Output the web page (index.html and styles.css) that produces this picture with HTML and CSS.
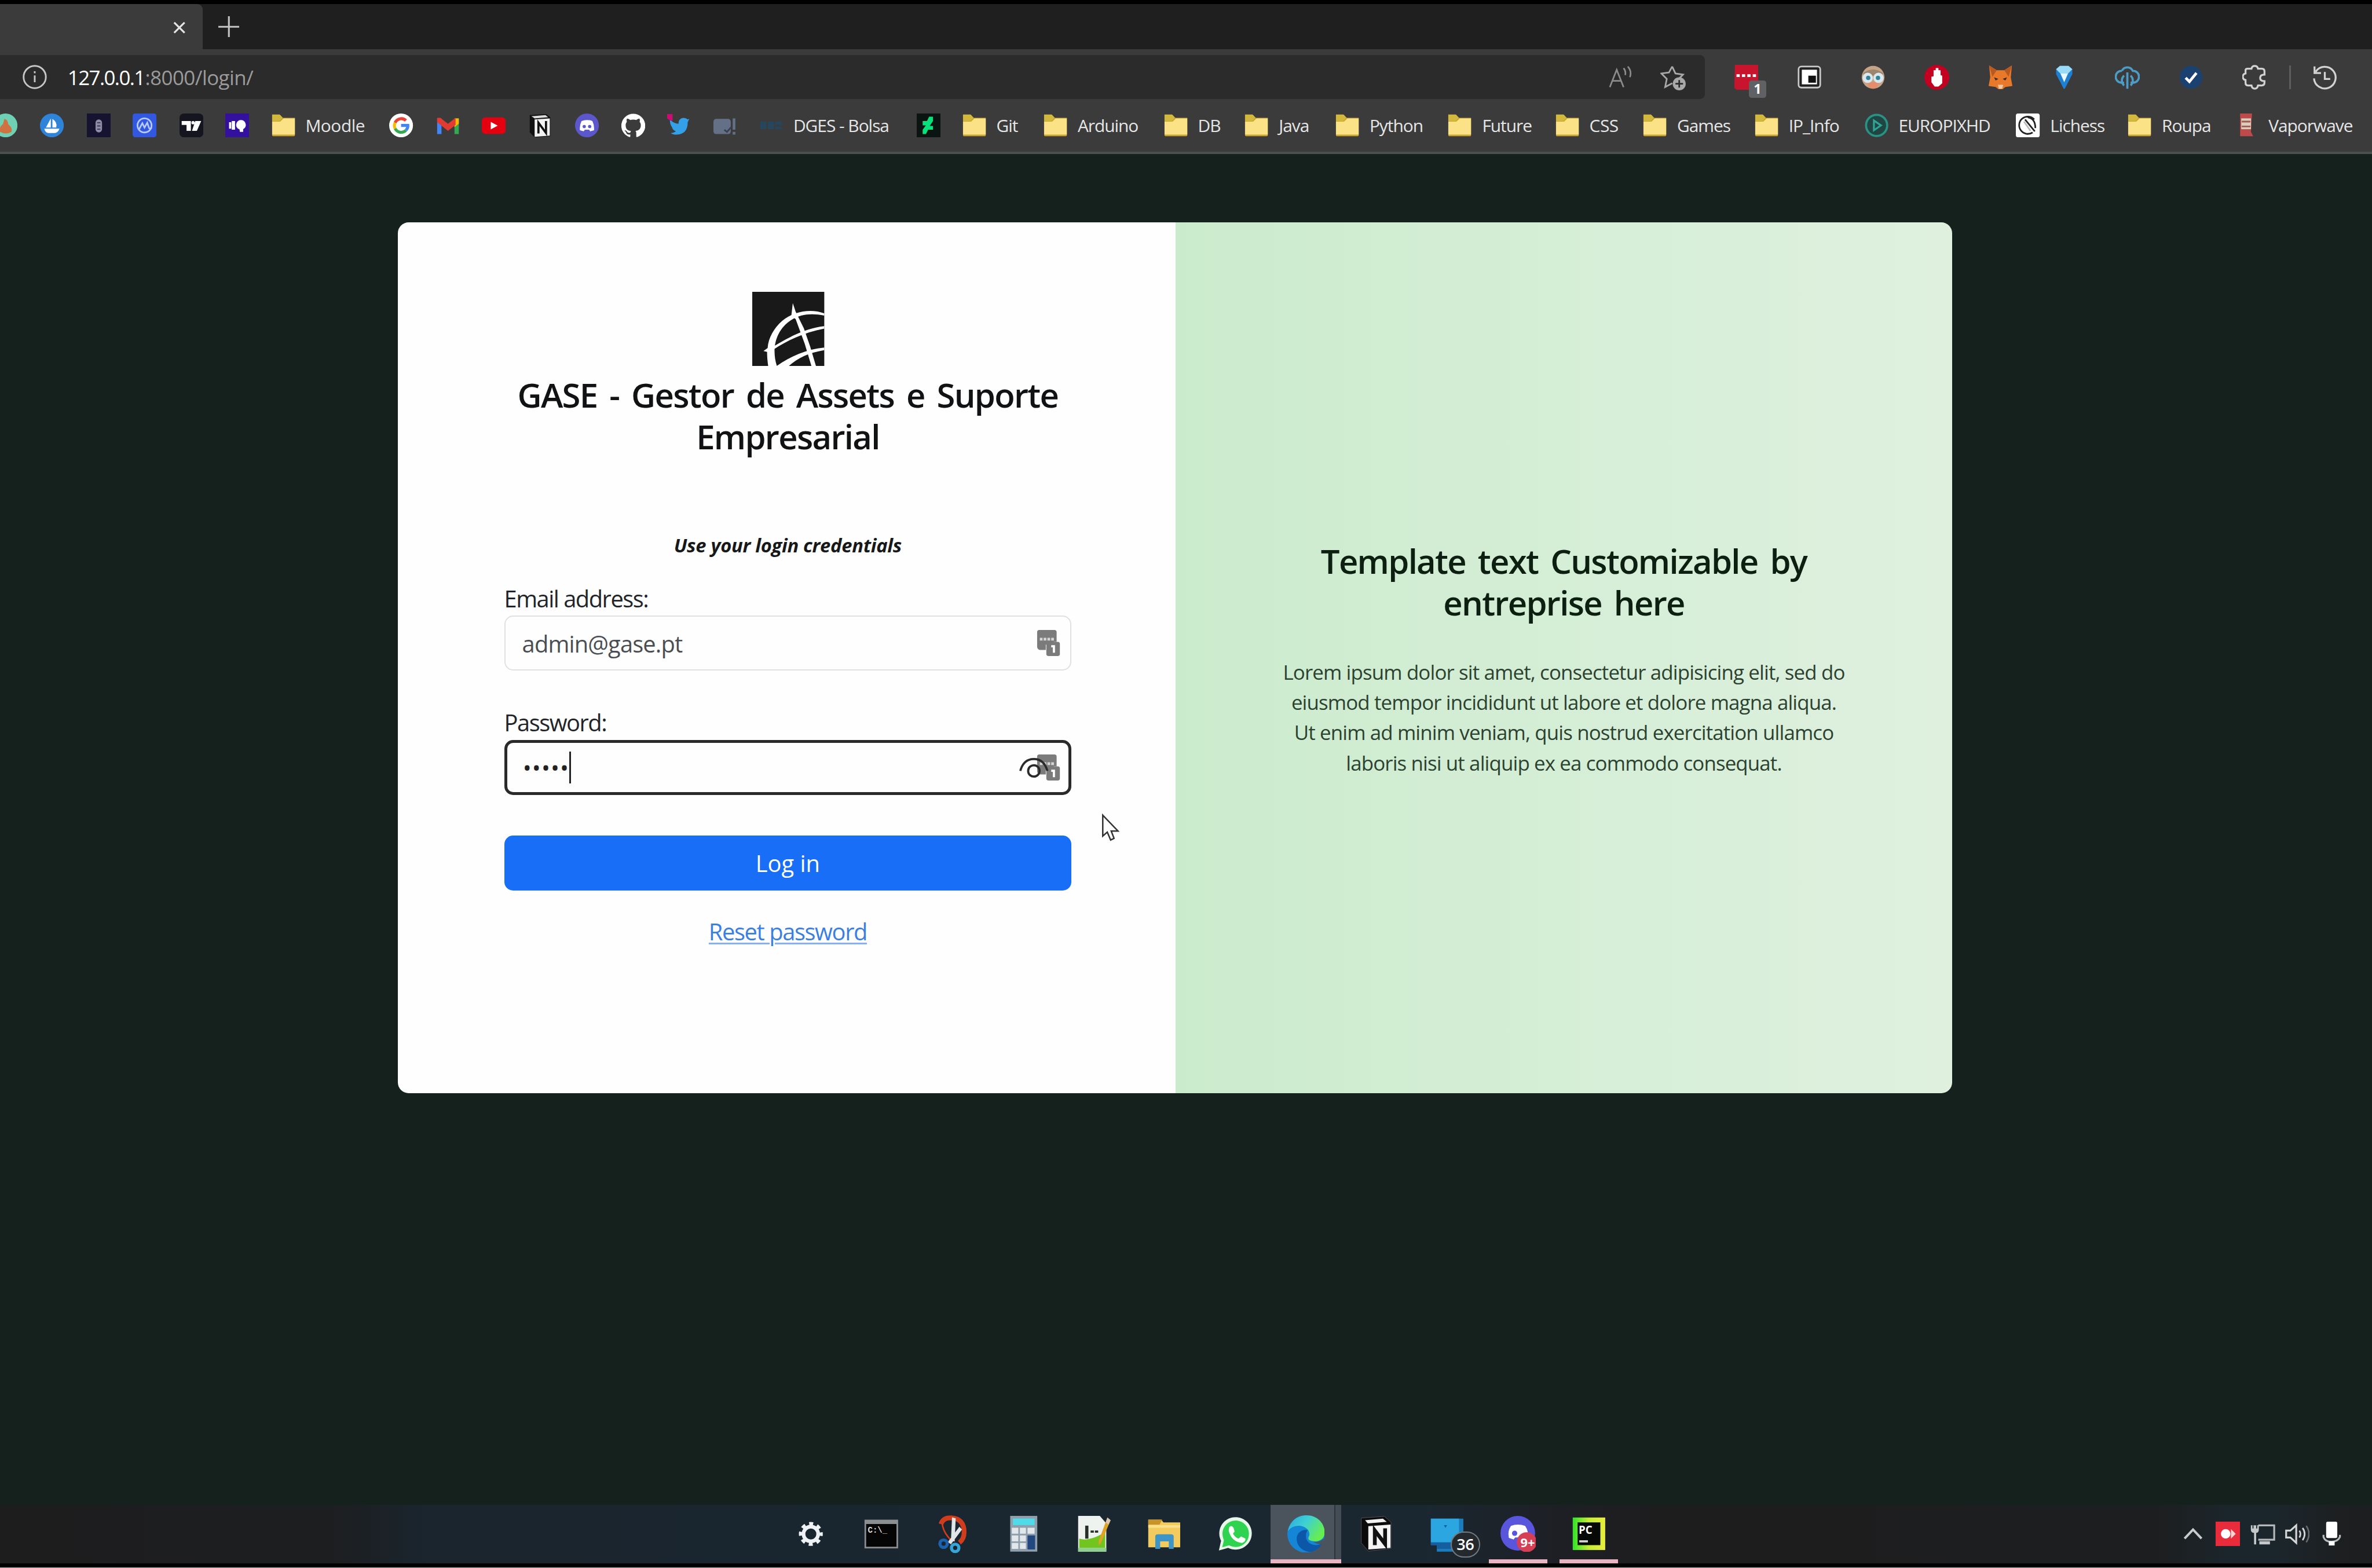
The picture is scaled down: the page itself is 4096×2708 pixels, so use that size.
FILE: index.html
```html
<!DOCTYPE html>
<html lang="en">
<head>
<meta charset="utf-8">
<title>GASE - Login</title>
<link rel="stylesheet" href="styles.css">
</head>
<body>
<svg class="defs" aria-hidden="true">
  <symbol id="folder" viewBox="0 0 44 44">
    <path d="M1 3h15l5 5h22v32a2 2 0 0 1-2 2H3a2 2 0 0 1-2-2z" fill="#c9a52c"/>
    <path d="M1 2h14l5 6-5 6H1z" fill="#d3b83e"/>
    <path d="M1 15h15l6-6h21v30H1z" fill="#fbe286"/>
  </symbol>
  <symbol id="keeper" viewBox="0 0 44 48">
    <path d="M4 0h29a4 4 0 0 1 4 4v18h-4a5 5 0 0 0-5 5H17v10H7a6 6 0 0 1-6-6V4a4 4 0 0 1 3-4z" fill="#7b7b7b"/>
    <path d="M6 17h26" stroke="#d6d6d6" stroke-width="5" stroke-dasharray="5 2"/>
    <rect x="18" y="22" width="25" height="26" rx="4" fill="#7b7b7b"/>
    <path d="M27 30h5v12" fill="none" stroke="#fff" stroke-width="4"/>
  </symbol>
</svg>

<header class="browser">
  <div class="tabs">
    <div class="tab"><svg class="close" viewBox="0 0 24 24"><path d="M2 2l20 20M22 2L2 22"/></svg></div>
    <svg class="plus" viewBox="0 0 40 40"><path d="M20 0v40M0 20h40"/></svg>
  </div>

  <div class="toolbar">
    <div class="address">
      <svg class="info" viewBox="0 0 48 48"><circle cx="24" cy="24" r="21"/><path d="M24 21v13M24 13v4"/></svg>
      <span class="host">127.0.0.1</span><span class="path">:8000/login/</span>
      <svg class="read" viewBox="0 0 46 42"><path d="M2 40L15 7l13 33M7 28h16M28 4q5 6 3 13M36 1q8 9 4 20"/></svg>
      <svg class="star" viewBox="0 0 48 48"><path d="M22 3l6 13 14 2-10 10M22 34L9 41l3-15L2 16l14-2 6-11"/><circle cx="35" cy="35" r="12" fill="#a9a9a9" stroke="none"/><path d="M35 28v14M28 35h14" stroke="#2b2b2b"/></svg>
    </div>
    <div class="extensions">
      <span class="ext">
        <svg class="ico" viewBox="0 0 46 46"><path d="M3 0h43v30l-18 16H8a6 6 0 0 1-6-6z" fill="#c8142c"/><path d="M6 20h36" stroke="#fff" stroke-width="5" stroke-dasharray="6 4"/></svg>
        <b class="count">1</b>
      </span>
      <span class="ext"><svg class="ico" viewBox="0 0 46 46"><rect x="3" y="3" width="40" height="39" rx="5" fill="#222" stroke="#c9c9c9" stroke-width="3"/><rect x="9" y="9" width="28" height="27" fill="#fff"/><rect x="21" y="20" width="14" height="13" fill="#111"/></svg></span>
      <span class="ext"><svg class="ico" viewBox="0 0 46 46"><circle cx="23" cy="23" r="21" fill="#c4a386"/><path d="M5 15Q23 2 41 15v5H5z" fill="#9c8570"/><path d="M12 32h22q-3 12-11 12t-11-12z" fill="#e88d6c"/><circle cx="13" cy="24" r="9.500" fill="#d9e8ee"/><circle cx="33" cy="24" r="9.500" fill="#d9e8ee"/><circle cx="14" cy="24" r="4" fill="#32829c"/><circle cx="32" cy="24" r="4" fill="#32829c"/></svg></span>
      <span class="ext"><svg class="ico" viewBox="0 0 46 46"><circle cx="23" cy="23" r="23" fill="#c40020"/><path d="M13 22l4-1V10h4V6h5v4h4v9l3 1v14l-7 6h-7l-6-8z" fill="#fff"/></svg></span>
      <span class="ext"><svg class="ico" viewBox="0 0 46 46"><path d="M2 1l14 9h14L44 1l-2 22 3 16-13 2-5 4h-8l-5-4-13-2 3-16z" fill="#e8782a"/><path d="M2 1l14 9-8 12zM44 1l-14 9 8 12z" fill="#b85a20"/><path d="M11 23l8 3-5 3zM35 23l-8 3 5 3z" fill="#3a2a20"/><path d="M18 37h10l-2 7h-6z" fill="#efc9a4"/></svg></span>
      <span class="ext"><svg class="ico" viewBox="0 0 46 46"><path d="M8 8l7-6h16l7 6v9L24 44h-2L8 17z" fill="#1f7fd0"/><path d="M8 8l7-6h16l7 6-8 8H16z" fill="#9adcf8"/><path d="M16 16h14l-7 16z" fill="#eaf8ff"/></svg></span>
      <span class="ext"><svg class="ico" viewBox="0 0 46 46"><path d="M13 11a11 11 0 0 1 20 0 11 11 0 0 1 1 22h-5M13 11a11 11 0 0 0-1 22h5M23 14v30M17 38a12 12 0 0 1 0-18M29 38a12 12 0 0 0 0-18" fill="none" stroke="#4d9cc6" stroke-width="4"/></svg></span>
      <span class="ext"><svg class="ico" viewBox="0 0 46 46"><circle cx="23" cy="23" r="21" fill="#1b4171"/><path d="M13 24l7 7 13-16" fill="none" stroke="#fff" stroke-width="5"/></svg></span>
      <span class="ext"><svg class="ico" viewBox="0 0 46 46"><path d="M10 7h7q1-5 6-5t6 5h7q5 0 5 5v6q-8 0-8 6t8 6v3q0 5-5 5h-7q-1 6-6 6t-6-6h-7q-4 0-4-5v-5q-5-1-5-6t5-6v-6q0-3 4-3z" fill="none" stroke="#d2d2d2" stroke-width="3.500"/></svg></span>
    </div>
    <i class="divider"></i>
    <svg class="ico history" viewBox="0 0 46 46"><path d="M6 13A20 20 0 1 1 3 25M4 3v12h12M23 13v13h10" fill="none" stroke="#d2d2d2" stroke-width="3.500"/></svg>
  </div>

  <nav class="bookmarks">
    <a><svg viewBox="0 0 44 44"><circle cx="22" cy="22" r="22" fill="#6fd0b4"/><path d="M12 34q-2-10 5-14l3-10q6 1 7 10 8 6 6 14-10 6-21 0z" fill="#cf7140"/></svg></a>
    <a><svg viewBox="0 0 44 44"><circle cx="22" cy="22" r="22" fill="#2f83d8"/><path d="M20 9v17h-9zM23 10q10 7 7 16h-7zM8 28h28q-3 8-9 8H16q-6 0-8-8z" fill="#fff"/></svg></a>
    <a><svg viewBox="0 0 44 44"><rect width="44" height="44" fill="#161330"/><rect x="16" y="11" width="12" height="24" rx="6" fill="#8f8ba6"/><path d="M19 17h6M19 23h6M19 29h6" stroke="#3a3655" stroke-width="2"/></svg></a>
    <a><svg viewBox="0 0 44 44"><rect width="44" height="44" rx="5" fill="#3158df"/><circle cx="22" cy="22" r="13" fill="none" stroke="#b6c9ff" stroke-width="3"/><path d="M12 29l6-11 4 8 5-9 3 9q2 4 5 0" fill="none" stroke="#b6c9ff" stroke-width="3"/></svg></a>
    <a><svg viewBox="0 0 44 44"><rect width="44" height="44" rx="8" fill="#14151f"/><path d="M4 14h17v18h-8V21H4zM29 14h11l-8 18h-9z" fill="#fff"/><circle cx="25" cy="17" r="3" fill="#fff"/></svg></a>
    <a><svg viewBox="0 0 44 44"><rect width="44" height="44" fill="#33109e"/><path d="M7 16h4v12H7zM12 14h6v16h-6z" fill="#fff"/><circle cx="29" cy="21" r="9" fill="#fff"/><path d="M26 27h7v7h-6z" fill="#fff"/></svg></a>
    <a><svg><use href="#folder"/></svg><span class="loose">Moodle</span></a>
    <a><svg viewBox="0 0 44 44"><circle cx="22" cy="22" r="22" fill="#fff"/><g fill="none" stroke-width="5.500"><path d="M31 13A12.500 12.500 0 0 0 11 17" stroke="#e84335"/><path d="M11 17A12.500 12.500 0 0 0 11 28" stroke="#f9bb06"/><path d="M11 28A12.500 12.500 0 0 0 31 31" stroke="#34a853"/><path d="M31 31Q35 27 34.500 22H22" stroke="#4285f4"/></g></svg></a>
    <a><svg viewBox="0 0 44 44"><path d="M2 9h8v29H2z" fill="#4285f4"/><path d="M34 9h8v29h-8z" fill="#34a853"/><path d="M34 9h8v10l-8 6z" fill="#f9bb06"/><path d="M2 8h6l14 11L36 8v13L22 32 2 16z" fill="#e23b32"/></svg></a>
    <a><svg viewBox="0 0 48 44"><rect x="0" y="6" width="48" height="33" rx="7" fill="#e50010"/><path d="M18 15l14 7.500L18 30z" fill="#fff"/></svg></a>
    <a><svg viewBox="0 0 44 44"><path d="M3 3l30-2 8 6v35l-29 2-9-9z" fill="#111"/><path d="M6 5l26-2 5 4-25 2z" fill="#ddd"/><path d="M12 11l28-2v32l-28 2z" fill="#f2f2f2"/><path d="M19 37V17l14 19V14" fill="none" stroke="#111" stroke-width="4"/></svg></a>
    <a><svg viewBox="0 0 44 44"><circle cx="22" cy="22" r="22" fill="#5c58cc"/><path d="M12 14q10-4 20 0 4 8 3 17l-7 2-2-3h-8l-2 3-7-2q-1-9 3-17z" fill="#fff"/><circle cx="17" cy="24" r="3" fill="#5c58cc"/><circle cx="27" cy="24" r="3" fill="#5c58cc"/></svg></a>
    <a><svg viewBox="0 0 24 24"><path fill="#fff" d="M12 .3a12 12 0 0 0-3.800 23.400c.6.100.8-.3.800-.6v-2c-3.300.7-4-1.600-4-1.600-.6-1.400-1.400-1.800-1.400-1.800-1-.7.1-.7.100-.7 1.200 0 1.900 1.200 1.900 1.200 1 1.800 2.800 1.300 3.500 1 0-.8.400-1.300.7-1.600-2.700-.3-5.500-1.300-5.500-6 0-1.200.5-2.300 1.300-3.100-.2-.4-.6-1.600 0-3.200 0 0 1-.3 3.400 1.200a11.500 11.500 0 0 1 6 0c2.300-1.500 3.300-1.200 3.300-1.200.6 1.600.2 2.800 0 3.200.9.800 1.300 1.900 1.300 3.200 0 4.600-2.800 5.600-5.500 5.900.5.400.9 1 .9 2.200v3.300c0 .3.100.7.800.6A12 12 0 0 0 12 .3"/></svg></a>
    <a><svg viewBox="0 0 44 44"><path d="M5 11q8 8 16 8 0-10 9-11 5 0 8 3l3-1-3 6q0 22-20 23Q9 39 7 36q6 0 9-3-6-3-7-8-4-5-4-14z" fill="#34a0e8"/><path d="M0 1h10v12H6L0 9z" fill="#cf0b76"/></svg></a>
    <a><svg viewBox="0 0 44 44"><rect y="10" width="32" height="28" rx="5" fill="#647086"/><path d="M38 9v21M38 34v5" stroke="#647086" stroke-width="5"/><path d="M20 30l5 4 8-9" fill="none" stroke="#39414f" stroke-width="3"/></svg></a>
    <a><svg viewBox="0 0 44 44"><path d="M2 15h11v14H2zM16 15h11v14H16zM29 15h13v6H29zM29 24h13v5H29z" fill="#25465c"/></svg><span>DGES - Bolsa</span></a>
    <a><svg viewBox="0 0 44 44"><rect width="44" height="44" fill="#0a1512"/><path d="M30 6v8l-6 9h6v7h-9l-4 8h-6v-8l6-8h-6v-8h8l4-8z" fill="#05e27c"/></svg></a>
    <a><svg><use href="#folder"/></svg><span>Git</span></a>
    <a><svg><use href="#folder"/></svg><span>Arduino</span></a>
    <a><svg><use href="#folder"/></svg><span>DB</span></a>
    <a><svg><use href="#folder"/></svg><span>Java</span></a>
    <a><svg><use href="#folder"/></svg><span>Python</span></a>
    <a><svg><use href="#folder"/></svg><span>Future</span></a>
    <a><svg><use href="#folder"/></svg><span class="loose">CSS</span></a>
    <a><svg><use href="#folder"/></svg><span>Games</span></a>
    <a><svg><use href="#folder"/></svg><span>IP_Info</span></a>
    <a><svg viewBox="0 0 44 44"><circle cx="22" cy="22" r="19.500" fill="#204542" stroke="#2a9285" stroke-width="4"/><path d="M17 13l13 9-13 9z" fill="none" stroke="#2fa495" stroke-width="3.500"/></svg><span>EUROPIXHD</span></a>
    <a><svg viewBox="0 0 44 44"><rect width="44" height="44" rx="4" fill="#fff"/><path d="M31 35A16 16 0 1 1 34 11M17 11l18 22M22 7q14 2 14 20" fill="none" stroke="#222" stroke-width="3"/><path d="M15 15l12 17" stroke="#bbb" stroke-width="3"/></svg><span>Lichess</span></a>
    <a><svg><use href="#folder"/></svg><span>Roupa</span></a>
    <a><svg viewBox="0 0 44 44"><path d="M11 0h22l-2 34 4 8H11z" fill="#bf4a4c"/><path d="M13 9h18v20H13z" fill="#d9cfbd"/><path d="M14 15h16M14 24h16" stroke="#a35a52" stroke-width="3"/></svg><span>Vaporwave</span></a>
  </nav>
</header>

<main class="page">
  <section class="card">
    <div class="login">
      <svg class="logo" viewBox="60 60 398 407" preserveAspectRatio="none">
        <path d="M60 60h398v407H60z" fill="#191919"/>
        <g fill="#fff">
          <path d="M148 467C143 430 142 410 142 390L122 385 145 368C150 310 180 260 225 220C290 163 390 152 458 178v12C390 178 330 180 275 215C190 270 165 370 196 467z"/>
          <path d="M284 122L300 170 345 260 380 360 412 467H387L350 345 300 210 276 190z"/>
          <path d="M140 382C230 330 330 262 458 248v14C340 285 250 330 178 376z"/>
          <path d="M195 467C270 415 360 375 458 366v14C370 394 310 425 262 467z"/>
        </g>
      </svg>
      <h1>GASE - Gestor de Assets e Suporte<br>Empresarial</h1>
      <p class="hint">Use your login credentials</p>

      <label class="email-label">Email address:</label>
      <div class="field">
        <span class="value">admin@gase.pt</span>
        <svg class="manager"><use href="#keeper"/></svg>
      </div>

      <label class="password-label">Password:</label>
      <div class="field focused">
        <span class="dots">•••••</span><i class="caret"></i>
        <svg class="manager"><use href="#keeper"/></svg>
        <svg class="eye" viewBox="0 0 54 38"><path d="M2 25Q8 3 27 3t25 22"/><circle cx="27" cy="25" r="10.500"/></svg>
      </div>

      <button class="submit">Log in</button>
      <a class="reset">Reset password</a>
    </div>
    <aside class="about">
      <h2>Template text Customizable by<br>entreprise here</h2>
      <p>Lorem ipsum dolor sit amet, consectetur adipisicing elit, sed do<br>eiusmod tempor incididunt ut labore et dolore magna aliqua.<br>Ut enim ad minim veniam, quis nostrud exercitation ullamco<br>laboris nisi ut aliquip ex ea commodo consequat.</p>
    </aside>
  </section>
  <svg class="cursor" viewBox="0 0 32 50"><path d="M2 3v37l8-7 6 14 6-3-5-13h12z"/></svg>
</main>

<footer class="taskbar">
  <div class="apps">
    <span class="app"><svg viewBox="0 0 66 66"><circle cx="33" cy="33" r="16" fill="none" stroke="#eef1f5" stroke-width="8"/><circle cx="33" cy="33" r="22" fill="none" stroke="#eef1f5" stroke-width="8" stroke-dasharray="8.600 8.680" stroke-dashoffset="4.300"/></svg></span>
    <span class="app"><svg viewBox="0 0 66 66"><rect x="2" y="7" width="62" height="53" fill="#8b8f92"/><rect x="5" y="15" width="56" height="42" fill="#050505"/><text x="8" y="31" class="prompt">C:\_</text></svg></span>
    <span class="app"><svg viewBox="0 0 66 76"><path d="M11 19q4-13 20-12 24 2 24 27 0 13-9 20" fill="none" stroke="#cf3d1c" stroke-width="9"/><path d="M13 14q1 20 18 36" fill="none" stroke="#cf3d1c" stroke-width="3"/><path d="M32 6l7 2-2 44-7-2zM46 24l5 5-21 28-6-4z" fill="#e2e6e8"/><circle cx="16" cy="56" r="7" fill="none" stroke="#1b62b0" stroke-width="6"/><circle cx="38" cy="64" r="7" fill="none" stroke="#36a6d8" stroke-width="6"/></svg></span>
    <span class="app"><svg viewBox="0 0 66 66"><rect x="9" width="50" height="66" fill="#8fa0ac"/><rect x="14" y="5" width="40" height="12" fill="#4fdbea"/><path d="M12 22h12v11H12zM27 22h11v11H27zM41 22h13v11H41zM12 36h12v11H12zM27 36h11v11H27zM12 50h12v11H12zM27 50h11v11H27z" fill="#e2e7ec"/><rect x="41" y="36" width="14" height="26" fill="#23477f"/></svg></span>
    <span class="app"><svg viewBox="0 0 66 66"><path d="M4 0h40l12 14v52H4z" fill="#eff3f0"/><path d="M6 42q18 6 48-12v29H6z" fill="#72c51f"/><path d="M4 59h52v7H4z" fill="#8fcf8f"/><path d="M20 18v24" stroke="#28302a" stroke-width="6"/><path d="M27 29h16" stroke="#28302a" stroke-width="4" stroke-dasharray="6 2"/><path d="M58 3l6 5-18 42-4 4v-8z" fill="#dfa325"/><path d="M58 3l6 5-4 8-5-4z" fill="#d8c7b4"/></svg></span>
    <span class="app"><svg viewBox="0 0 66 66"><path d="M3 7h24l4 5h31v46H3z" fill="#f2ca5e"/><path d="M3 7h26l-5 9H3z" fill="#c9932c"/><path d="M3 17h59v5H3z" fill="#fae08a"/><path d="M16 61V38q0-4 5-4h24q5 0 5 4v23h-9V47H25v14z" fill="#3d94c6"/></svg></span>
    <span class="app"><svg viewBox="0 0 66 66"><path d="M3 64l4-18A30 30 0 1 1 20 59z" fill="#e9f7ea"/><circle cx="34" cy="33" r="24.500" fill="#2fd350"/><path d="M9 58l4-16 10 12z" fill="#2fd350"/><path d="M22 21q4-5 8 1l2 7-3 4q4 7 10 9l5-4 8 4q1 5-6 8Q26 48 21 27z" fill="#fff"/></svg></span>
    <span class="app active"><svg viewBox="0 0 68 68"><defs><linearGradient id="e1" x1="0" y1="0" x2="1" y2=".5"><stop offset="0" stop-color="#2aa9dc"/><stop offset=".5" stop-color="#3fd0d4"/><stop offset="1" stop-color="#66ee50"/></linearGradient></defs><circle cx="34" cy="34" r="34" fill="#1586d6"/><path d="M1 29C5 10 18 0 35 0c20 0 33 15 33 31 0 12-10 18-22 16-7-1-9-4-7-8 5-10-6-20-18-20-9 0-16 4-20 10z" fill="url(#e1)"/><path d="M37 27c-12-2-20 6-20 16 0 12 9 22 24 24 9-1 18-7 22-15-15 6-30-1-29-15 0-4 1-7 3-10z" fill="#0d57a8"/><path d="M47 48q9 3 20-6l-4 11q-9 0-16-5z" fill="#4c545d"/></svg></span>
    <span class="app"><svg viewBox="0 0 66 66"><path d="M5 4l43-3 12 11v48l-42 5L5 50z" fill="#0b0b0b" stroke="#555" stroke-width="1"/><path d="M12 8l33-3 7 6-35 3z" fill="#f1f1f1"/><path d="M18 19l41-3v43l-41 3z" fill="#f4f4f4"/><path d="M30 54V27l19 25V23" fill="none" stroke="#111" stroke-width="7"/></svg></span>
    <span class="app"><svg viewBox="0 0 66 66"><path d="M3 5h60v44H46v17H14V54H3z" fill="#1c7dbd"/><path d="M3 5h52v44H3z" fill="#2ba6e0"/><path d="M27 17l3 5 3-5z" fill="#0b5f9a"/><path d="M3 49h38v12H14V54H3z" fill="#155f9e"/></svg><b class="unread">36</b></span>
    <span class="app running"><svg viewBox="0 0 68 68"><circle cx="33" cy="33" r="33" fill="#5a55dd"/><path d="M20 19q13-5 27 0 7 10 5 23l-9 3-3-4H28l-3 4-9-3q-3-13 4-23z" fill="#fff"/><circle cx="27" cy="33" r="5" fill="#5a55dd"/><circle cx="50" cy="50" r="19" fill="#d64055"/><text x="38" y="59" class="nine">9+</text></svg></span>
    <span class="app running"><svg viewBox="0 0 66 66"><defs><linearGradient id="p1"><stop offset="0" stop-color="#31e32a"/><stop offset=".5" stop-color="#c8ec35"/><stop offset="1" stop-color="#e6ee3e"/></linearGradient></defs><rect x="3" y="3" width="60" height="60" fill="url(#p1)"/><rect x="12" y="12" width="42" height="42" fill="#060906"/><text x="14" y="33" class="pc">PC</text><path d="M15 47h16" stroke="#d5d5d5" stroke-width="4"/></svg></span>
  </div>
  <div class="tray">
    <span><svg viewBox="0 0 48 48"><path d="M8 33l16-17 16 17" fill="none" stroke="#c9cbcd" stroke-width="4.500"/></svg></span>
    <span><svg viewBox="0 0 48 48"><rect x="1" y="1" width="46" height="46" fill="#e92c3b"/><circle cx="20" cy="24" r="9" fill="#fff"/><path d="M30 15l9 9-9 9" fill="#ffd3d3"/></svg></span>
    <span><svg viewBox="0 0 48 48"><path d="M16 8h30v27H16" fill="none" stroke="#b4b8bb" stroke-width="3.500"/><path d="M2 8h15v8q0 6-5 6v22H8V22q-6 0-6-6zM18 38h20v6H18z" fill="#c4c8ca"/><path d="M6 8v6M13 8v6" stroke="#1b262c" stroke-width="2"/></svg></span>
    <span><svg viewBox="0 0 48 48"><path d="M3 18h8L22 8v33L11 31H3z" fill="none" stroke="#d3d5d6" stroke-width="3.500"/><path d="M28 18q4 6 0 13M34 13q8 11 0 23" fill="none" stroke="#d3d5d6" stroke-width="3"/><path d="M41 9q10 15 0 31" fill="none" stroke="#666c70" stroke-width="3"/></svg></span>
    <span><svg viewBox="0 0 48 48"><rect x="14" y="1" width="21" height="31" rx="3" fill="#fff"/><path d="M9 26v4q3 9 15 9t16-9v-4" fill="none" stroke="#b9bcbe" stroke-width="3.500"/><path d="M19 38h11v8H19z" fill="#fff"/></svg></span>
  </div>
</footer>
<div class="edge"></div>
</body>
</html>
```
FILE: styles.css
```css
/* 1rem is 1/438 of the window's width */
html { font-size: calc(100vw / 438); }
* { box-sizing: border-box; }
body {
  margin: 0;
  height: 100vh;
  display: flex;
  flex-direction: column;
  overflow: hidden;
  background: #15211d;
  font-family: "Open Sans", "Noto Sans", sans-serif;
  color: #212529;
}
svg { display: block; flex: none; }
.defs { position: absolute; width: 0; height: 0; }

/* browser chrome */
.browser {
  flex: none;
  height: 28.4rem;
  border-top: .8rem solid #000;
  border-bottom: .5rem solid #4c5150;
  background: #3b3b3b;
}
.tabs {
  height: 8.3rem;
  display: flex;
  align-items: center;
  background: #1f1f1f;
}
.tab {
  width: 37.4rem;
  height: 100%;
  display: flex;
  align-items: center;
  justify-content: flex-end;
  padding-right: 3.1rem;
  background: #3b3b3b;
  border-top-right-radius: 1rem;
}
.close { width: 2.3rem; height: 2.3rem; stroke: #e4e4e4; stroke-width: 3.6; margin-top: .4rem; }
.plus { width: 3.9rem; height: 3.9rem; margin-left: 2.9rem; stroke: #c4c4c4; stroke-width: 3.4; }

.toolbar { height: 9.3rem; display: flex; align-items: center; padding-top: 1.1rem; }
.address {
  width: 314.8rem;
  height: 8.1rem;
  display: flex;
  align-items: center;
  background: #2b2b2b;
  border-radius: 0 .9rem .9rem 0;
  font-size: 3.73rem;
  line-height: 5rem;
}
.info { width: 4.7rem; height: 4.7rem; margin: 0 3.7rem 0 4.1rem; fill: none; stroke: #c6c6c6; stroke-width: 3.2; }
.host, .path { padding-top: .3rem; }
.host { color: #fff; font-weight: 500; letter-spacing: -.17rem; }
.path { color: #9b9b9b; letter-spacing: -.06rem; margin-left: .1rem; }
.read { width: 4.5rem; height: 4.1rem; margin-left: auto; fill: none; stroke: #8c8c8c; stroke-width: 3; }
.star { width: 4.8rem; height: 4.8rem; margin: .3rem 3.4rem 0 5rem; fill: none; stroke: #a9a9a9; stroke-width: 3; }
.ico { width: 4.6rem; height: 4.6rem; }
.extensions { display: flex; margin-left: 1.7rem; }
.ext { position: relative; width: 11.75rem; display: flex; justify-content: center; }
.count {
  position: absolute;
  left: 6.4rem;
  top: 2.9rem;
  width: 3.3rem;
  height: 3.2rem;
  border-radius: .5rem;
  background: #5f6164;
  color: #fff;
  font-size: 2.5rem;
  line-height: 3.2rem;
  text-align: center;
}
.divider { width: .3rem; height: 4.4rem; margin-left: .5rem; background: #5d5d5d; }
.history { margin-left: 3.9rem; }

.bookmarks {
  height: 9.6rem;
  margin-left: -1.15rem;
  display: grid;
  grid-template-columns: 8.55rem 8.6rem 8.5rem 8.6rem 8.5rem 8.5rem 21.8rem 8.6rem 8.5rem 8.5rem 8.7rem 8.5rem 8.5rem 8.5rem 8.5rem 29.1rem 8.4rem 15rem 22.2rem 14.95rem 16.75rem 20.8rem 19.8rem 16.2rem 20.6rem 20.3rem 28rem 20.6rem 19.7rem 25.4rem;
  align-items: center;
  font-size: 3.2rem;
  font-weight: 500;
  line-height: 5rem;
  color: #e6e6e6;
}
.bookmarks a { display: flex; align-items: center; white-space: nowrap; }
.bookmarks svg { width: 4.4rem; height: 4.4rem; }
.bookmarks span { margin-left: 1.9rem; padding-top: .1rem; letter-spacing: -.11rem; }
.bookmarks .loose { letter-spacing: -.05rem; }

/* login page */
.page { position: relative; flex: 1; padding-top: 12.7rem; }
.card {
  width: 287rem;
  height: 160.8rem;
  margin-left: 73.5rem;
  display: flex;
  border-radius: 2rem;
  overflow: hidden;
}
.login {
  width: 143.55rem;
  padding: 12.8rem 19.2rem 0 19.6rem;
  display: flex;
  flex-direction: column;
  background: #fefefe;
}
.logo { align-self: center; width: 13.3rem; height: 13.7rem; margin-left: .2rem; }
h1, h2 {
  margin: 0;
  font-weight: 600;
  font-size: 6.2rem;
  line-height: 7.66rem;
  letter-spacing: -.18rem;
  word-spacing: .8rem;
  text-align: center;
  white-space: nowrap;
  color: #101214;
}
h1 { margin-top: 1.5rem; }
.hint {
  margin: 13.8rem 0 0;
  font: italic 700 3.5rem/5.2rem "Open Sans", "Noto Sans", sans-serif;
  letter-spacing: -.03rem;
  text-align: center;
  color: #16181a;
}
label { font-size: 4.26rem; line-height: 6.2rem; letter-spacing: -.16rem; }
.email-label { margin-top: 4.1rem; }
.password-label { margin-top: 6.5rem; }
.field {
  position: relative;
  height: 10.15rem;
  display: flex;
  align-items: center;
  padding-left: 3.1rem;
  border: .3rem solid #dfe1e3;
  border-radius: 1.6rem;
  font-size: 4.26rem;
  color: #4a4e52;
}
.focused { border: .6rem solid #2a2a2a; padding-left: 2.9rem; color: #222; margin-top: .1rem; }
.value { letter-spacing: -.09rem; line-height: 6rem; padding-top: .2rem; }
.dots { letter-spacing: .12rem; line-height: 6rem; padding-top: .2rem; }
.caret { width: .3rem; height: 5.8rem; background: #222; }
.manager { position: absolute; right: 1.8rem; top: 2.4rem; width: 4.4rem; height: 4.8rem; }
.focused .manager { right: 1.5rem; top: 2.1rem; }
.eye { position: absolute; right: 3.7rem; top: 2.7rem; width: 5.4rem; height: 3.8rem; fill: none; stroke: #2a2a2a; stroke-width: 4; }
.submit {
  height: 10.2rem;
  margin: 7.5rem 0 0;
  padding: 0;
  border: 0;
  border-radius: 1.6rem;
  background: #186ef6;
  color: #fff;
  font: 400 4.26rem/6.2rem "Open Sans", "Noto Sans", sans-serif;
}
.reset {
  margin-top: 4.3rem;
  align-self: center;
  font-size: 4.26rem;
  line-height: 6.4rem;
  letter-spacing: -.15rem;
  color: #3b7fe0;
  text-decoration: underline;
  text-decoration-thickness: .35rem;
  text-decoration-color: #86b0ee;
  text-underline-offset: .4rem;
}
.about {
  flex: 1;
  padding-top: 58.7rem;
  background: linear-gradient(90deg, #cbebcd, #d5eed6 50%, #dff0df);
  text-align: center;
}
.about h2 { color: #0c1f10; }
.about p {
  margin: 6.2rem 0 0;
  font-size: 3.73rem;
  line-height: 5.6rem;
  letter-spacing: -.093rem;
  white-space: nowrap;
  color: #2c4231;
}
.cursor { position: absolute; left: 203.4rem; top: 121.8rem; width: 3.4rem; height: 5.2rem; fill: #fff; stroke: #333; stroke-width: 2.6; }

/* taskbar */
.taskbar {
  flex: none;
  height: 10.8rem;
  display: flex;
  justify-content: space-between;
  padding: 0 4.25rem 0 143.2rem;
  background: linear-gradient(90deg, #1d1d1e 0, #1d1e20 14%, #1a252e 18%, #1a2731 60%, #1e1f24 66%, #1d1d1e 70%, #1d1e1f 91%, #1b262c 94%, #1b262c 96%, #1d1e1f 99%);
}
.apps, .tray { display: flex; align-items: stretch; }
.app { position: relative; width: 13.06rem; display: flex; align-items: center; justify-content: center; }
.app svg { width: 6.6rem; height: 6.6rem; }
.app:nth-child(1) svg { width: 5.6rem; height: 5.6rem; }
.app:nth-child(3) svg { height: 7.4rem; }
.app.active svg { width: 6.9rem; height: 6.9rem; }
.active { background: linear-gradient(90deg, #4b545c 90%, #2b343b 90%, #2b343b 92%, #444d55 92%); }
.active::after, .running::after {
  content: "";
  position: absolute;
  left: 1.1rem;
  right: 1.1rem;
  bottom: 0;
  height: .7rem;
  background: #e9b3c2;
}
.active::after { left: 0; right: 0; }
.unread {
  position: absolute;
  left: 7.1rem;
  top: 5rem;
  width: 5.5rem;
  height: 4.8rem;
  border: .25rem solid #737a80;
  border-radius: 2.4rem;
  background: #24292e;
  color: #fff;
  font-size: 2.9rem;
  font-weight: 600;
  line-height: 4.2rem;
  letter-spacing: -.05rem;
  text-align: center;
}
.prompt { font: 700 15px "Liberation Mono", monospace; fill: #ddd; }
.nine { font: 700 24px "Open Sans", sans-serif; fill: #fff; }
.pc { font: 700 20px "Open Sans", sans-serif; fill: #fff; }
.tray span { width: 6.4rem; display: flex; align-items: center; justify-content: center; }
.tray svg { width: 4.7rem; height: 4.7rem; }
.edge { flex: none; height: .9rem; background: #000; border-bottom: .15rem solid #b9b9b9; }
```
